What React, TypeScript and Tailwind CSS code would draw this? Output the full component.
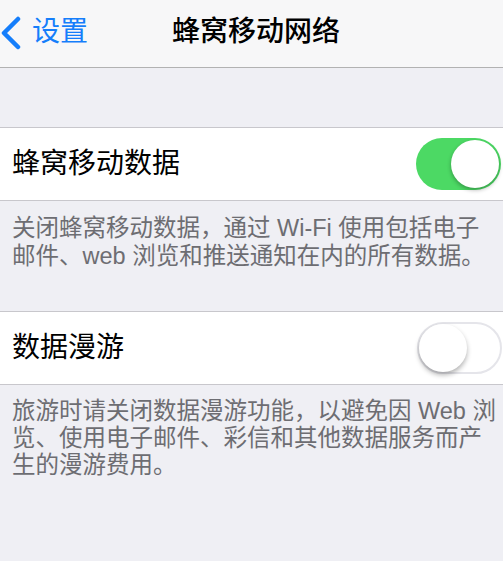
import React from 'react'

const FONT = { fontFamily: '"Liberation Sans", "Noto Sans CJK SC", sans-serif' }

function Toggle({ on }: { on: boolean }) {
  return on ? (
    <div className="w-[85px] h-[52px] rounded-full bg-[#4cd964] flex items-center justify-end p-[2px] shrink-0">
      <div className="w-[48px] h-[48px] rounded-full bg-white shadow-[0_2px_4px_rgba(0,0,0,0.3)]" />
    </div>
  ) : (
    <div className="w-[85px] h-[52px] rounded-full bg-white border-2 border-[#e5e5ea] flex items-center justify-start shrink-0">
      <div className="w-[48px] h-[48px] rounded-full bg-white shadow-[0_3px_5px_rgba(0,0,0,0.3)]" />
    </div>
  )
}

export default function App() {
  return (
    <div className="w-[503px] h-[561px] bg-[#efeff4] overflow-hidden" style={FONT}>
      {/* Nav bar */}
      <div className="h-[68px] bg-[#f7f7f8] border-b border-[#b2b2b2] flex items-center pb-1">
        <div className="w-[172px] flex items-center">
          <svg width="22" height="34" viewBox="0 0 22 34" className="mt-[2px]">
            <polyline points="18,3 4,17 18,31" fill="none" stroke="#157efb" strokeWidth="4.5" strokeLinecap="round" strokeLinejoin="round" />
          </svg>
          <span className="ml-[10px] text-[28px] text-[#157efb] leading-none">设置</span>
        </div>
        <span className="text-[28px] text-black font-medium leading-none">蜂窝移动网络</span>
      </div>

      <div className="h-[59px]" />

      {/* Cellular data */}
      <div className="h-[74px] bg-white border-y border-[#c8c7cc] flex items-center justify-between pl-3 pr-[2px]">
        <span className="text-[28px] text-black leading-none">蜂窝移动数据</span>
        <Toggle on />
      </div>
      <p className="pl-3 pt-[13px] pb-[41px] text-[23.5px] leading-[28px] text-[#6d6d72] whitespace-nowrap">
        关闭蜂窝移动数据，通过 Wi-Fi 使用包括电子
        <br />
        邮件、web 浏览和推送通知在内的所有数据。
      </p>

      {/* Roaming */}
      <div className="h-[74px] bg-white border-y border-[#c8c7cc] flex items-center justify-between pl-3 pr-[1px]">
        <span className="text-[28px] text-black leading-none">数据漫游</span>
        <Toggle on={false} />
      </div>
      <p className="pl-3 pt-[13px] text-[23.5px] leading-[27px] text-[#6d6d72] whitespace-nowrap">
        旅游时请关闭数据漫游功能，以避免因 Web 浏
        <br />
        览、使用电子邮件、彩信和其他数据服务而产
        <br />
        生的漫游费用。
      </p>
    </div>
  )
}
